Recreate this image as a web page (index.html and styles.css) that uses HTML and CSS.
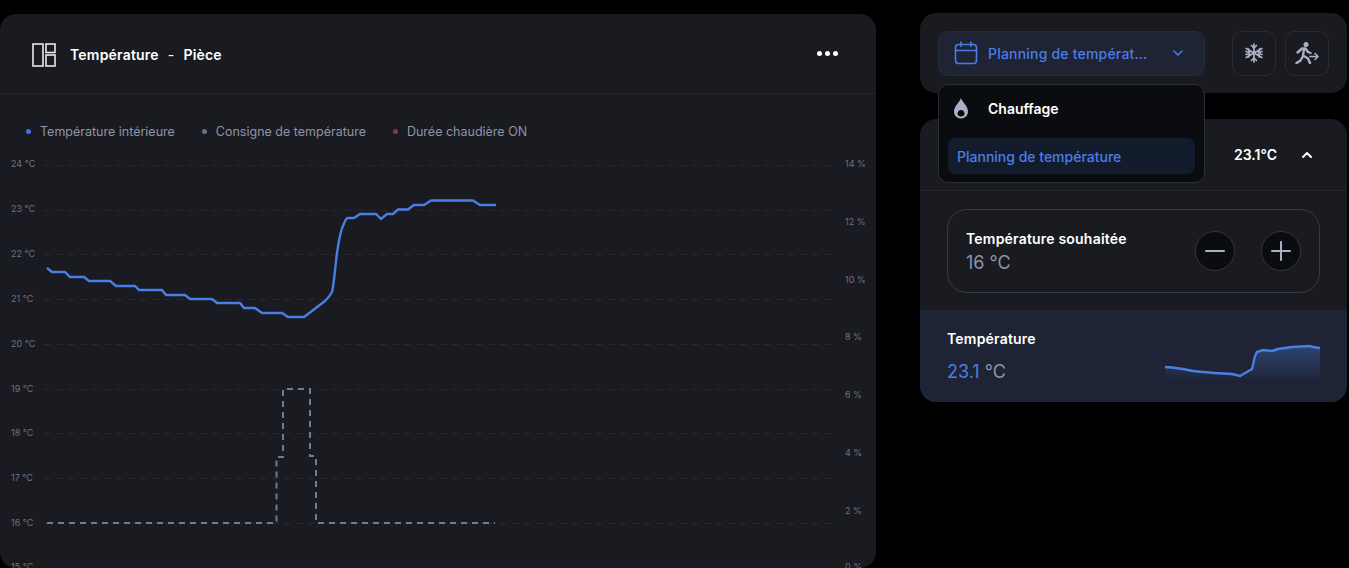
FILE: index.html
```html
<!DOCTYPE html>
<html>
  <head>
    <title>Température - Pièce</title>
    <meta charset="utf-8" />
    <link rel="stylesheet" href="styles.css">
  </head>
  <body>
    <section class="panel chart-panel">
      <header class="chart-head">
        <svg class="layout-icon" width="24" height="24" viewBox="0 0 24 24" fill="none" stroke="#e8e9ee" stroke-width="1.6">
          <rect x="1" y="1" width="10" height="22" />
          <rect x="14" y="1" width="9" height="8.500" />
          <rect x="14" y="12" width="9" height="11" />
        </svg>
        <h1 class="chart-title">Température<span class="sep">-</span>Pièce</h1>
        <div class="dots"><i></i><i></i><i></i></div>
      </header>
      <ul class="legend">
        <li><i class="dot blue"></i>Température intérieure</li>
        <li><i class="dot grey"></i>Consigne de température</li>
        <li><i class="dot red"></i>Durée chaudière ON</li>
      </ul>
      <svg class="chart" width="876" height="418" viewBox="0 150 876 418">
        <g class="grid">
          <path d="M44 165.500H834M44 210.500H834M44 254.500H834M44 299.500H834M44 344.500H834M44 389.500H834M44 433.500H834M44 478.500H834M44 523.500H834" />
        </g>
        <g class="axis">
          <text x="11" y="167">24 °C</text>
          <text x="11" y="212">23 °C</text>
          <text x="11" y="257">22 °C</text>
          <text x="11" y="302">21 °C</text>
          <text x="11" y="347">20 °C</text>
          <text x="11" y="392">19 °C</text>
          <text x="11" y="436">18 °C</text>
          <text x="11" y="481">17 °C</text>
          <text x="11" y="526">16 °C</text>
          <text x="11" y="570">15 °C</text>
          <text x="845" y="167">14 %</text>
          <text x="845" y="225">12 %</text>
          <text x="845" y="283">10 %</text>
          <text x="845" y="340">8 %</text>
          <text x="845" y="398">6 %</text>
          <text x="845" y="456">4 %</text>
          <text x="845" y="514">2 %</text>
          <text x="845" y="570">0 %</text>
        </g>
        <path class="setpoint" d="M47 523H276.500V457H283V389H310V456H316V523H495" />
        <path class="temp" d="M47 268L52 272H65L70 277H84L89 281H110L116 286H135L139 290H162L166 295H185L190 299H212L217 303H240L244 308H255L262 313H282L288 317H304L325 301C328 298 330 296 332 292C334 284 335 268 337 253C339 240 340 232 343 226C345 221 346 218 348 218H354L360 214H376L381 219L387 214H393L398 209.500H408L414 205H424L431 200.500H473L480 205H496" />
      </svg>
    </section>

    <div class="side">
      <section class="panel controls">
        <div class="select">
          <svg width="24" height="24" viewBox="0 0 24 24" fill="none" stroke="#4a7ee6" stroke-width="1.6" stroke-linecap="round">
            <rect x="1.500" y="3.500" width="21" height="19" rx="3" />
            <path d="M1.500 9.500H22.500M7 1V5.500M17 1V5.500" />
          </svg>
          <span class="select-label">Planning de température</span>
          <svg width="12" height="8" viewBox="0 0 12 8" fill="none" stroke="#4a7ee6" stroke-width="1.600" stroke-linecap="round" stroke-linejoin="round">
            <path d="M2 2L6 6L10 2" />
          </svg>
        </div>
        <button class="mode">
          <svg width="20" height="20" viewBox="0 0 20 20" fill="none" stroke="#a9b0c8" stroke-width="1.700" stroke-linecap="round" stroke-linejoin="round">
            <path d="M10 1V19M2.200 5.500L17.800 14.500M2.200 14.500L17.800 5.500" />
            <path d="M7.500 2.500L10 5L12.500 2.500M7.500 17.500L10 15L12.500 17.500M2 8.500L5.500 9.500L4.500 6M18 8.500L14.500 9.500L15.500 6M2 11.500L5.500 10.500L4.500 14M18 11.500L14.500 10.500L15.500 14" />
          </svg>
        </button>
        <button class="mode">
          <svg width="24" height="22" viewBox="0 0 24 22" fill="none" stroke="#a9b0c8" stroke-width="2.400" stroke-linecap="round" stroke-linejoin="round">
            <circle cx="11" cy="2.500" r="2.500" fill="#a9b0c8" stroke="none" />
            <path d="M2.500 10.500L7 6.500H10.500L13 10L15.500 11" />
            <path d="M9 7L8 13.500L13 16.500L15 21" />
            <path d="M7.500 15L5.500 18.500L1.500 21" />
            <path d="M15 14.500H23M20 11.500L23 14.500L20 17.500" stroke-width="1.500" />
          </svg>
        </button>
        <div class="menu">
          <div class="menu-group">
            <svg width="16" height="21" viewBox="0 0 16 21">
              <path fill-rule="evenodd" fill="#a9b0c8" d="M8 0C9 4 15 8 15 13.500C15 17.500 12 20.500 8 20.500C4 20.500 1 17.500 1 13.500C1 8 7 4 8 0ZM8 12C6 12 4.500 13.700 4.500 15.500C4.500 17.300 6 18.500 8 18.500C10 18.500 11.500 17.300 11.500 15.500C11.500 13.700 10 12 8 12Z" />
            </svg>
            <span>Chauffage</span>
          </div>
          <div class="menu-item">Planning de température</div>
        </div>
      </section>

      <section class="panel room">
        <div class="room-head">
          <span class="room-temp">23.1°C</span>
          <svg width="12" height="8" viewBox="0 0 12 8" fill="none" stroke="#fff" stroke-width="2" stroke-linecap="round" stroke-linejoin="round">
            <path d="M2 6L6 2L10 6" />
          </svg>
        </div>
        <div class="room-body">
          <div class="target">
            <div class="target-text">
              <div class="label">Température souhaitée</div>
              <div class="value">16 °C</div>
            </div>
            <button class="round">
              <svg width="20" height="20" viewBox="0 0 20 20" stroke="#a9b0c8" stroke-width="2" stroke-linecap="round"><path d="M1 10H19" /></svg>
            </button>
            <button class="round">
              <svg width="20" height="20" viewBox="0 0 20 20" stroke="#a9b0c8" stroke-width="2" stroke-linecap="round"><path d="M1 10H19M10 1V19" /></svg>
            </button>
          </div>
        </div>
        <div class="reading">
          <div>
            <div class="label">Température</div>
            <div class="reading-value"><b>23.1</b> °C</div>
          </div>
          <svg class="spark" width="155" height="42" viewBox="1165 340 155 42">
            <defs>
              <linearGradient id="fade" x1="0" y1="0" x2="0" y2="1">
                <stop offset="0" stop-color="#2f4474" />
                <stop offset="1" stop-color="#1e2435" />
              </linearGradient>
            </defs>
            <path fill="url(#fade)" d="M1165 367L1172 367.500L1183 369L1193 371L1203 372L1215 373L1232 374L1240 376L1252 369C1254 362 1254 356 1257 352L1263 350L1272 351L1278 349L1292 347L1310 346L1313 347L1320 348V381H1165Z" />
            <path fill="none" stroke="#4a7ee6" stroke-width="2.400" d="M1165 367L1172 367.500L1183 369L1193 371L1203 372L1215 373L1232 374L1240 376L1252 369C1254 362 1254 356 1257 352L1263 350L1272 351L1278 349L1292 347L1310 346L1313 347L1320 348" />
          </svg>
        </div>
      </section>
    </div>
  </body>
</html>
```

FILE: styles.css
```css
html,
body {
  margin: 0;
  padding: 0;
  height: 100%;
  overflow: hidden;
  font: 13px Inter, "Noto Sans", sans-serif;
  color: #fff;
  background: #000;
}
body {
  display: flex;
  align-items: flex-start;
}
button {
  padding: 0;
  font: inherit;
}
.panel {
  background: #191b20;
  border-radius: 16px;
}

/* chart */
.chart-panel {
  flex: 0 0 876px;
  height: 554px;
  margin-top: 14px;
  overflow: hidden;
}
.chart-head {
  display: flex;
  align-items: center;
  height: 79px;
  padding: 2px 38px 0 32px;
  box-sizing: border-box;
  height: 80px;
  border-bottom: 1px solid #26282e;
}
.layout-icon {
  margin-right: 14px;
}
.chart-title {
  flex: 1;
  margin: 0;
  font-size: 14px;
  font-weight: 600;
  letter-spacing: 0.2px;
}
.sep {
  margin: 0 9px;
  font-weight: 400;
}
.dots {
  display: flex;
  gap: 3px;
  margin-top: -2px;
}
.dots i {
  width: 5px;
  height: 5px;
  border-radius: 50%;
  background: #fff;
}
.legend {
  display: flex;
  gap: 27px;
  box-sizing: border-box;
  height: 56px;
  margin: 0;
  padding: 18px 0 0 26px;
  list-style: none;
  align-items: center;
  color: #8f94a8;
  font-size: 12.500px;
}
.legend li {
  display: flex;
  align-items: center;
}
.dot {
  width: 5px;
  height: 5px;
  margin-right: 9px;
  border-radius: 50%;
}
.dot.blue {
  background: #3f74e4;
}
.dot.grey {
  background: #6b7085;
}
.dot.red {
  background: #8a3a3a;
}
.chart {
  display: block;
}
.grid path {
  fill: none;
  stroke: #27292f;
  stroke-dasharray: 7 5;
}
.axis text {
  fill: #6e7284;
  font-size: 9px;
}
.setpoint {
  fill: none;
  stroke: #747a90;
  stroke-width: 2;
  stroke-dasharray: 6 5;
}
.temp {
  fill: none;
  stroke: #4a7ee6;
  stroke-width: 2.400;
}

/* right column */
.side {
  flex: 0 0 426px;
  margin: 13px 0 0 44px;
}
.controls {
  position: relative;
  display: flex;
  align-items: center;
  gap: 9px;
  height: 80px;
  padding: 0 18px;
  box-sizing: border-box;
}
.select {
  display: flex;
  align-items: center;
  box-sizing: border-box;
  width: 267px;
  height: 45px;
  margin-right: 18px;
  padding: 0 20px 0 15px;
  border: 1px solid #272c3c;
  border-radius: 10px;
  background: #1e2433;
  color: #4a7ee6;
  font-size: 14px;
  font-weight: 500;
  letter-spacing: 0.2px;
}
.select-label {
  flex: 1;
  min-width: 0;
  margin: 0 22px 0 10px;
  overflow: hidden;
  white-space: nowrap;
  text-overflow: ellipsis;
}
.mode {
  display: flex;
  align-items: center;
  justify-content: center;
  width: 44px;
  height: 45px;
  border: 1px solid #2a2c33;
  border-radius: 10px;
  background: transparent;
}
.menu {
  position: absolute;
  top: 71px;
  left: 18px;
  z-index: 2;
  box-sizing: border-box;
  width: 267px;
  height: 99px;
  padding: 0 9px;
  border: 1px solid #2c2f38;
  border-radius: 10px;
  background: #0b0c10;
}
.menu-group {
  display: flex;
  align-items: center;
  height: 46px;
  margin-bottom: 7px;
  padding-left: 5px;
  font-size: 14px;
  font-weight: 600;
}
.menu-group svg {
  margin-right: 19px;
}
.menu-item {
  height: 36px;
  padding-left: 9px;
  border-radius: 8px;
  background: #131c2d;
  color: #4a7ee6;
  font-size: 14px;
  font-weight: 500;
  line-height: 38px;
}
.room {
  margin-top: 26px;
  overflow: hidden;
}
.room-head {
  display: flex;
  align-items: center;
  justify-content: flex-end;
  gap: 24px;
  height: 72px;
  padding-right: 34px;
  border-bottom: 1px solid #26282e;
  box-sizing: border-box;
}
.room-temp {
  font-size: 14px;
  font-weight: 600;
}
.room-body {
  padding: 18px 27px 17px;
}
.target {
  display: flex;
  align-items: center;
  gap: 26px;
  box-sizing: border-box;
  height: 84px;
  padding: 0 18px;
  border: 1px solid #383b45;
  border-radius: 20px;
}
.target-text {
  flex: 1;
}
.label {
  font-size: 14px;
  font-weight: 600;
  letter-spacing: 0.2px;
}
.value {
  margin-top: 5px;
  color: #8f94a8;
  font-size: 18px;
}
.round {
  display: flex;
  align-items: center;
  justify-content: center;
  width: 40px;
  height: 40px;
  border: 1px solid #33363f;
  border-radius: 50%;
  background: #0b0c10;
}
.reading {
  display: flex;
  align-items: center;
  justify-content: space-between;
  height: 92px;
  padding: 0 27px;
  box-sizing: border-box;
  background: #1e2435;
}
.reading-value {
  margin-top: 14px;
  color: #8f94a8;
  font-size: 18px;
}
.reading-value b {
  color: #4a7ee6;
  font-weight: 400;
}
.spark {
  display: block;
  margin-top: 10px;
}
```
